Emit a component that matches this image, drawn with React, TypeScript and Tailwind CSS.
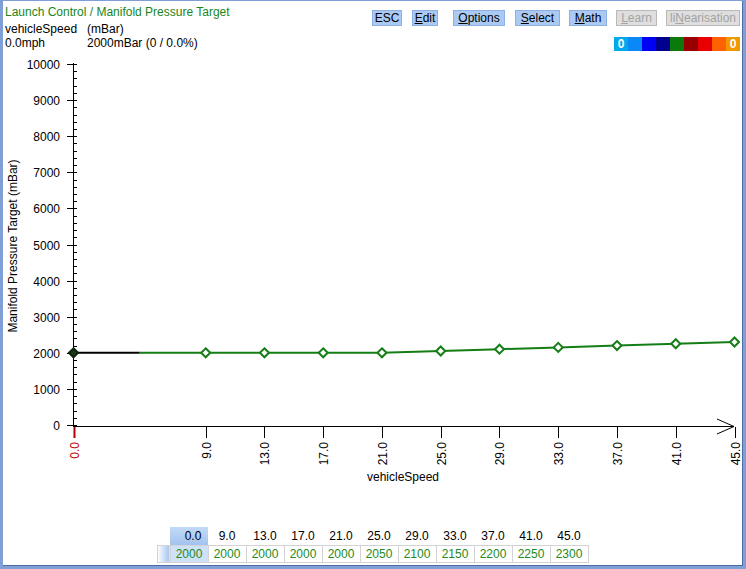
import React from 'react';

const xs = [0, 9, 13, 17, 21, 25, 29, 33, 37, 41, 45];
const vals = [2000, 2000, 2000, 2000, 2000, 2050, 2100, 2150, 2200, 2250, 2300];

// chart coordinates are page pixels; the svg is shifted back by its own offset
const px = (v: number) => 73.5 + v * (661 / 45);
const py = (v: number) => 425 - v * 0.0361;

const barColors = ['#00a8ec', '#0a88f8', '#0000f2', '#00008e', '#0a7a0a', '#980000', '#e80000', '#ff6000', '#f09800'];

function Btn({ children, w, ml, disabled }: { children: React.ReactNode; w: string; ml: string; disabled?: boolean }) {
  return (
    <div
      className={`${w} ${ml} flex h-[16px] items-center justify-center border text-[12px] leading-none ${
        disabled ? 'border-[#b9b9b9] bg-[#dedede] text-[#a3a3a3]' : 'border-[#8db0e2] bg-[#abcaf3] text-black'
      }`}
    >
      {children}
    </div>
  );
}

function Chart() {
  const majors = [0, 1000, 2000, 3000, 4000, 5000, 6000, 7000, 8000, 9000, 10000];
  const minors: number[] = [];
  for (let v = 0; v <= 10000; v += 200) minors.push(v);
  const pts = xs.map((x, i) => [px(x), py(vals[i])] as const);
  const half = (pts[0][0] + pts[1][0]) / 2;
  const green = '#157d15';

  return (
    <svg width={739} height={470} className="block">
      <g transform="translate(-3,-57)">
        {/* y axis */}
        <line x1={73.5} y1={63} x2={73.5} y2={427} stroke="#000" shapeRendering="crispEdges" />
        {minors.map((v) => (
          <line key={'m' + v} x1={73} y1={Math.round(py(v)) + 0.5} x2={77} y2={Math.round(py(v)) + 0.5} stroke="#000" shapeRendering="crispEdges" />
        ))}
        {majors.map((v) => (
          <g key={'M' + v}>
            <line x1={67} y1={Math.round(py(v)) + 0.5} x2={74} y2={Math.round(py(v)) + 0.5} stroke="#000" shapeRendering="crispEdges" />
            <text x={60} y={Math.round(py(v)) + 4.5} fontSize={12} textAnchor="end" fill="#000">
              {v}
            </text>
          </g>
        ))}
        <text transform="translate(17,246) rotate(-90)" fontSize={12} textAnchor="middle" fill="#000">
          Manifold Pressure Target (mBar)
        </text>

        {/* x axis */}
        <line x1={73} y1={426.5} x2={734} y2={426.5} stroke="#000" shapeRendering="crispEdges" />
        <polyline points="717,419 734,426.5 717,434" fill="none" stroke="#000" strokeWidth={1} />
        {xs.map((x, i) => {
          const cx = Math.round(px(x));
          return (
            <g key={'x' + x}>
              <line
                x1={i === 0 ? cx + 0.5 : cx + 0.5}
                y1={427}
                x2={i === 0 ? cx + 0.5 : cx + 0.5}
                y2={438}
                stroke={i === 0 ? '#b00000' : '#000'}
                strokeWidth={i === 0 ? 2 : 1}
              />
              <text
                transform={`translate(${cx + 5},442) rotate(-90)`}
                fontSize={12}
                textAnchor="end"
                fill={i === 0 ? '#c00000' : '#000'}
              >
                {x.toFixed(1)}
              </text>
            </g>
          );
        })}
        <text x={403} y={481} fontSize={12} textAnchor="middle" fill="#000">
          vehicleSpeed
        </text>

        {/* data */}
        <polyline
          points={[[half, pts[0][1]], ...pts.slice(1)].map((p) => p.join(',')).join(' ')}
          fill="none"
          stroke={green}
          strokeWidth={2}
        />
        <line x1={pts[0][0]} y1={pts[0][1]} x2={half} y2={pts[0][1]} stroke="#000" strokeWidth={2} />
        {pts.map(([x, y], i) => (
          <polygon
            key={'p' + i}
            points={`${x},${y - 4.5} ${x + 4.5},${y} ${x},${y + 4.5} ${x - 4.5},${y}`}
            fill={i === 0 ? '#163a16' : '#fff'}
            stroke={i === 0 ? '#0c220c' : green}
            strokeWidth={2}
          />
        ))}
      </g>
    </svg>
  );
}

export default function App() {
  return (
    <div className="h-[569px] w-[746px] overflow-hidden border-b-[3px] border-l-[3px] border-r-[3px] border-t border-[#7f9fd6] bg-white font-['Liberation_Sans',Arial,sans-serif] text-[12px] text-black">
      <div className="flex h-full flex-col border-b border-r border-[#4b6ca6]">
        <div className="flex h-[56px] justify-between pl-[2px] pr-[2px]">
          <div className="pt-[4px] leading-[14px]">
            <div className="text-[#1a861a]">Launch Control / Manifold Pressure Target</div>
            <div className="mt-[3px] flex">
              <span className="w-[82px]">vehicleSpeed</span>
              <span>(mBar)</span>
            </div>
            <div className="flex">
              <span className="w-[82px]">0.0mph</span>
              <span>2000mBar (0 / 0.0%)</span>
            </div>
          </div>
          <div className="flex flex-col items-end pt-[9px]">
            <div className="flex">
              <Btn w="w-[30px]" ml="ml-0">ESC</Btn>
              <Btn w="w-[26px]" ml="ml-[10px]">
                <u>E</u>dit
              </Btn>
              <Btn w="w-[52px]" ml="ml-[15px]">
                <u>O</u>ptions
              </Btn>
              <Btn w="w-[45px]" ml="ml-[10px]">
                <u>S</u>elect
              </Btn>
              <Btn w="w-[38px]" ml="ml-[9px]">
                <u>M</u>ath
              </Btn>
              <Btn w="w-[41px]" ml="ml-[9px]" disabled>
                <u>L</u>earn
              </Btn>
              <Btn w="w-[74px]" ml="ml-[9px]" disabled>
                li<u>N</u>earisation
              </Btn>
            </div>
            <div className="mt-[11px] flex h-[14px]">
              {barColors.map((c, i) => (
                <div
                  key={c}
                  className="flex w-[14px] items-center justify-center text-[12px] font-bold leading-none text-white"
                  style={{ backgroundColor: c }}
                >
                  {i === 0 || i === barColors.length - 1 ? '0' : ''}
                </div>
              ))}
            </div>
          </div>
        </div>

        <Chart />

        <div className="flex justify-center">
          <table className="border-collapse text-[12px] leading-none">
            <tbody>
              <tr className="h-[18px]">
                <td className="w-[13px] p-0" />
                {xs.map((x, i) => (
                  <td
                    key={'h' + x}
                    className={`w-[38px] p-0 text-center ${
                      i === 0 ? 'bg-gradient-to-b from-[#c3daf7] to-[#a2c3ef] pl-[8px]' : ''
                    }`}
                  >
                    {x.toFixed(1)}
                  </td>
                ))}
              </tr>
              <tr className="h-[17px]">
                <td className="w-[13px] border border-[#d3d3d3] bg-gradient-to-r from-white to-[#a5c4ef] p-0" />
                {vals.map((v, i) => (
                  <td
                    key={'v' + i}
                    className={`w-[38px] border border-[#d3d3d3] p-0 text-center text-[#228a22] ${
                      i === 0 ? 'bg-[#cfe1f8]' : ''
                    }`}
                  >
                    {v}
                  </td>
                ))}
              </tr>
            </tbody>
          </table>
        </div>
      </div>
    </div>
  );
}
